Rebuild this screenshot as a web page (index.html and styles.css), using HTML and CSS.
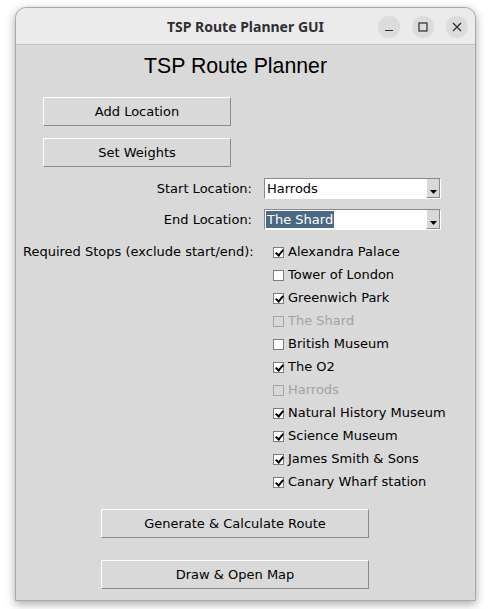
FILE: index.html
```html
<!DOCTYPE html>
<html>
<head>
<meta charset="utf-8">
<link rel="stylesheet" href="styles.css">
</head>
<body>
<div class="window">
  <div class="titlebar">
    <span class="title">TSP Route Planner GUI</span>
    <div class="controls">
      <span class="ctl"><svg width="10" height="10" viewBox="0 0 10 10"><line x1="1" y1="8.5" x2="9" y2="8.5" stroke="#2e2e2e" stroke-width="1.2"/></svg></span>
      <span class="ctl"><svg width="10" height="10" viewBox="0 0 10 10"><rect x="1" y="1" width="8" height="8" fill="none" stroke="#2e2e2e" stroke-width="1.2"/></svg></span>
      <span class="ctl"><svg width="10" height="10" viewBox="0 0 10 10"><path d="M1 1L9 9M9 1L1 9" stroke="#2e2e2e" stroke-width="1.3"/></svg></span>
    </div>
  </div>
  <div class="content">
    <h1 class="heading">TSP Route Planner</h1>
    <button class="btn btn-top">Add Location</button>
    <button class="btn btn-top btn-second">Set Weights</button>
    <div class="form">
      <div class="label row-combo">Start Location:</div>
      <div class="combo row-combo"><span class="val">Harrods</span><span class="arrow"><svg width="7" height="4" viewBox="0 0 7 4"><path d="M0 0H7L3.5 4Z" fill="#000"/></svg></span></div>
      <div class="label row-combo row-end">End Location:</div>
      <div class="combo row-combo row-end"><span class="val sel">The Shard</span><span class="arrow"><svg width="7" height="4" viewBox="0 0 7 4"><path d="M0 0H7L3.5 4Z" fill="#000"/></svg></span></div>
      <div class="label stops-label">Required Stops (exclude start/end):</div>
      <div class="checks">
        <div class="check"><span class="box on"></span>Alexandra Palace</div>
        <div class="check"><span class="box"></span>Tower of London</div>
        <div class="check"><span class="box on"></span>Greenwich Park</div>
        <div class="check disabled"><span class="box"></span>The Shard</div>
        <div class="check"><span class="box"></span>British Museum</div>
        <div class="check"><span class="box on"></span>The O2</div>
        <div class="check disabled"><span class="box"></span>Harrods</div>
        <div class="check"><span class="box on"></span>Natural History Museum</div>
        <div class="check"><span class="box on"></span>Science Museum</div>
        <div class="check"><span class="box on"></span>James Smith &amp; Sons</div>
        <div class="check"><span class="box on"></span>Canary Wharf station</div>
      </div>
    </div>
    <button class="btn btn-wide btn-gen">Generate &amp; Calculate Route</button>
    <button class="btn btn-wide btn-draw">Draw &amp; Open Map</button>
  </div>
</div>
</body>
</html>
```
FILE: styles.css
```css
html, body {
  margin: 0;
  padding: 0;
  background: #ffffff;
}
body {
  width: 489px;
  height: 609px;
  overflow: hidden;
}
.window {
  margin: 7px 0 0 15px;
  width: 459px;
  height: 592px;
  border: 1px solid #a9a9a9;
  border-radius: 11px 11px 0 0;
  box-shadow: 0 3px 10px rgba(0,0,0,0.35);
  background: #d9d9d9;
  display: flex;
  flex-direction: column;
  overflow: hidden;
  font-family: "DejaVu Sans", sans-serif;
  font-size: 13px;
  color: #000;
}
.titlebar {
  position: relative;
  height: 36px;
  flex: none;
  background: #ebebeb;
  border-bottom: 1px solid #c2c2c2;
  display: flex;
  align-items: center;
  justify-content: center;
}
.title {
  font-family: "Noto Sans", "DejaVu Sans", sans-serif;
  font-weight: 700;
  font-size: 14px;
  color: #2f2f2f;
}
.controls {
  position: absolute;
  right: 7px;
  top: 8px;
  display: flex;
  gap: 12px;
}
.ctl {
  width: 22px;
  height: 22px;
  border-radius: 50%;
  background: #dcdcdc;
  display: flex;
  align-items: center;
  justify-content: center;
}
.content {
  flex: 1;
  display: flex;
  flex-direction: column;
  align-items: flex-start;
  padding-top: 8px;
}
.heading {
  align-self: stretch;
  margin: 0;
  text-align: center;
  font-family: "Liberation Sans", Arial, sans-serif;
  font-weight: 400;
  font-size: 21.3px;
  line-height: 26px;
  padding-right: 20px;
}
.btn {
  font-family: "DejaVu Sans", sans-serif;
  font-size: 13px;
  color: #000;
  background: #d9d9d9;
  border: 1px solid;
  border-color: #ffffff #8a8a8a #8a8a8a #ffffff;
  padding: 0;
  height: 29px;
}
.btn-top {
  margin: 18px 0 0 27px;
  width: 188px;
}
.btn-second {
  margin-top: 12px;
}
.form {
  margin: 11px 0 0 7px;
  display: grid;
  grid-template-columns: 229px 177px;
  column-gap: 12px;
  align-items: start;
}
.label {
  text-align: right;
  line-height: 21px;
  white-space: nowrap;
}
.row-end {
  margin-top: 10px;
}
.combo {
  height: 21px;
  box-sizing: border-box;
  background: #ffffff;
  border: 1px solid;
  border-color: #8a8a8a #ffffff #ffffff #8a8a8a;
  display: flex;
  align-items: stretch;
}
.val {
  margin: 1px 0 1px 1px;
  padding: 0 1px;
  line-height: 17px;
  align-self: flex-start;
}
.val.sel {
  background: #4a6984;
  color: #ffffff;
}
.combo .arrow {
  margin-left: auto;
  width: 12px;
  background: #d9d9d9;
  border-left: 1px solid #ffffff;
  border-right: 1px solid #8a8a8a;
  border-bottom: 1px solid #8a8a8a;
  display: flex;
  justify-content: center;
  align-items: flex-end;
  padding-bottom: 3px;
}
.stops-label {
  margin-top: 10px;
  line-height: 23px;
  text-align: left;
}
.checks {
  margin-top: 10px;
  padding-left: 9px;
  display: flex;
  flex-direction: column;
}
.check {
  height: 23px;
  display: flex;
  align-items: center;
  gap: 4px;
  white-space: nowrap;
}
.box {
  flex: none;
  width: 11px;
  height: 11px;
  box-sizing: border-box;
  border: 1px solid #7c7c7c;
  background: #ffffff;
  position: relative;
  margin-top: 1px;
}
.box.on::after {
  content: "";
  position: absolute;
  left: 1px;
  top: 0px;
  width: 3px;
  height: 6px;
  border-right: 2px solid #000;
  border-bottom: 2px solid #000;
  transform: translate(2px, 0) rotate(40deg);
  transform-origin: center;
}
.check.disabled {
  color: #a3a3a3;
}
.check.disabled .box {
  background: #d9d9d9;
  border-color: #a3a3a3;
}
.btn-wide {
  width: 268px;
  margin-left: 85px;
}
.btn-gen {
  margin-top: 16px;
}
.btn-draw {
  margin-top: 22px;
}
```
